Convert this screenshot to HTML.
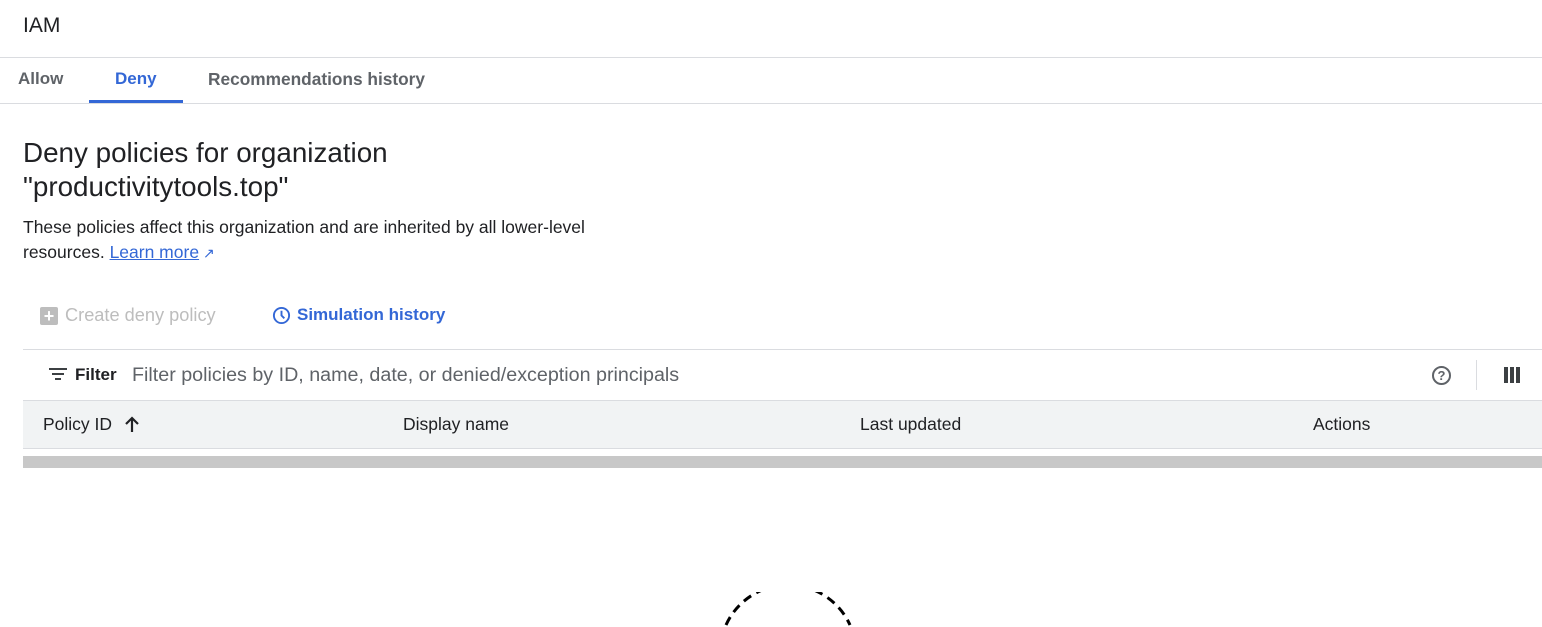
<!DOCTYPE html>
<html><head><style>
*{box-sizing:border-box;margin:0;padding:0}
body{width:1542px;height:627px;overflow:hidden;background:#fff;font-family:"Liberation Sans",Arial,sans-serif;color:#202124;position:relative}
.a{position:absolute;white-space:nowrap}
</style></head><body>
<div class="a" style="left:23px;top:14px;font-size:21px;">IAM</div>
<div class="a" style="left:0;top:57px;width:1542px;height:1px;background:#dadce0"></div>
<div class="a" style="left:18px;top:69px;font-size:17px;color:#5f6368;font-weight:bold">Allow</div>
<div class="a" style="left:115px;top:69px;font-size:17px;color:#3367d6;font-weight:bold">Deny</div>
<div class="a" style="left:89px;top:100px;width:94px;height:3px;background:#3367d6"></div>
<div class="a" style="left:208px;top:69px;font-size:17.3px;color:#5f6368;font-weight:bold">Recommendations history</div>
<div class="a" style="left:0;top:103px;width:1542px;height:1px;background:#dadce0"></div>
<div class="a" style="left:23px;top:136px;font-size:27.8px;line-height:34px;">Deny policies for organization<br>"productivitytools.top"</div>
<div class="a" style="left:23px;top:215px;font-size:17.5px;line-height:25px;">These policies affect this organization and are inherited by all lower-level<br>resources. <span style="color:#3367d6;text-decoration:underline">Learn more</span><span style="color:#3367d6;font-size:14px"> ↗</span></div>
<div class="a" style="left:40px;top:307px;width:18px;height:18px;background:#bdbdbd;border-radius:2px;color:#fff;font-size:18px;line-height:18px;text-align:center;font-weight:bold">+</div>
<div class="a" style="left:65px;top:305px;font-size:18.2px;color:#bdbdbd;">Create deny policy</div>
<svg class="a" style="left:272px;top:306px" width="19" height="19" viewBox="0 0 20 20"><circle cx="10" cy="10" r="8" fill="none" stroke="#3367d6" stroke-width="2"/><path d="M10 5v5l3 3" fill="none" stroke="#3367d6" stroke-width="2"/></svg>
<div class="a" style="left:297px;top:305px;font-size:17px;color:#3367d6;font-weight:bold">Simulation history</div>
<div class="a" style="left:23px;top:349px;width:1519px;height:1px;background:#dadce0"></div>
<svg class="a" style="left:49px;top:367px" width="18" height="14"><path d="M0 2h18M3 7h12M6 12h6" stroke="#3c4043" stroke-width="2"/></svg>
<div class="a" style="left:75px;top:365px;font-size:17px;font-weight:bold">Filter</div>
<div class="a" style="left:132px;top:364px;font-size:19.7px;color:#5f6368;">Filter policies by ID, name, date, or denied/exception principals</div>
<div class="a" style="left:1432px;top:366px;width:19px;height:19px;border:2px solid #5f6368;border-radius:50%;font-size:13px;font-weight:bold;text-align:center;line-height:15px;color:#5f6368">?</div>
<div class="a" style="left:1476px;top:360px;width:1px;height:30px;background:#dadce0"></div>
<svg class="a" style="left:1504px;top:367px" width="16" height="16"><path d="M0 0h4v16H0zM6 0h4v16H6zM12 0h4v16h-4z" fill="#3c4043"/></svg>
<div class="a" style="left:23px;top:400px;width:1519px;height:49px;background:#f1f3f4;border-top:1px solid #dadce0;border-bottom:1px solid #dadce0"></div>
<div class="a" style="left:43px;top:414px;font-size:17.5px;">Policy ID</div>
<svg class="a" style="left:124px;top:416px" width="16" height="16"><path d="M8 16V2M2 8l6-6 6 6" fill="none" stroke="#202124" stroke-width="2.2"/></svg>
<div class="a" style="left:403px;top:414px;font-size:17.5px;">Display name</div>
<div class="a" style="left:860px;top:414px;font-size:17.5px;">Last updated</div>
<div class="a" style="left:1313px;top:414px;font-size:17.5px;">Actions</div>
<div class="a" style="left:23px;top:456px;width:1519px;height:12px;background:#c8c8c8"></div>
<svg class="a" style="left:720px;top:592px" width="140" height="35"><path d="M6 33 A68 68 0 0 1 130 33" fill="none" stroke="#000" stroke-width="3" stroke-dasharray="9 6"/></svg>
</body></html>
